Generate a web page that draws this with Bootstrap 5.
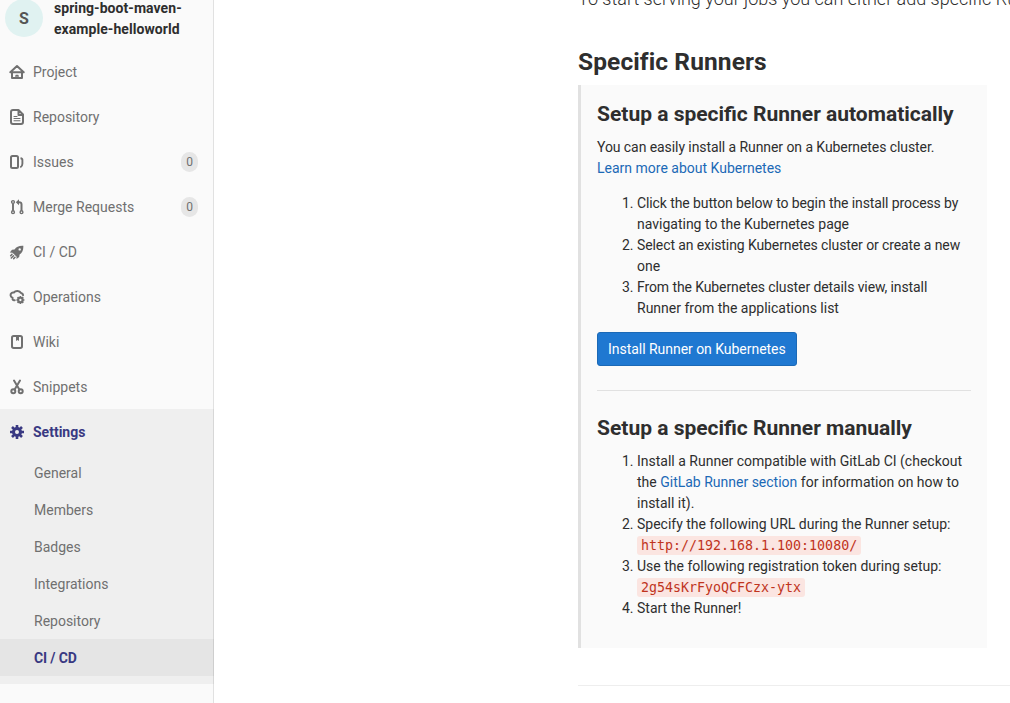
<!DOCTYPE html>
<html lang="en">
<head>
<meta charset="utf-8">
<meta name="viewport" content="width=device-width, initial-scale=1">
<title>CI / CD Settings</title>
<link href="https://cdn.jsdelivr.net/npm/bootstrap@5.3.0/dist/css/bootstrap.min.css" rel="stylesheet">
<style>
  body { font: 400 14px/21px Roboto, "Noto Sans", sans-serif; color: #2e2e2e; background: #fff; }
  a { text-decoration: none; color: #1b69b6; }
  .shell { height: 703px; }
  .sidebar { width: 214px; background: #fafafa; box-shadow: inset -1px 0 0 #e1e1e1; }
  .project-head { height: 49px; padding-left: 5px; gap: 11px; }
  .project-title { margin-top: -2px; font-weight: 700; letter-spacing: .06px; }
  .avatar { width: 38px; height: 38px; margin-top: -1px; background: #e0f2f1; color: #555; font-size: 16px; font-weight: 700; }
  .sidebar .nav-link { height: 45px; padding: 1px 16px 0 9px; gap: 8px; color: #707070; }
  .sidebar svg { width: 16px; height: 16px; flex: none; }
  .count { width: 17px; height: 20px; line-height: 20px; background: #e6e6e6; font-size: 12px; }
  .settings { background: rgba(0,0,0,.043); padding-bottom: 8px; }
  .sidebar .settings > .nav-link { color: #393982; font-weight: 700; }
  .sidebar .sub .nav-link { height: 37px; padding: 1px 0 0 34px; }
  .sidebar .sub .nav-link.active { background: rgba(0,0,0,.04); color: #393982; font-weight: 700; letter-spacing: -.15px; }
  .content { margin-left: 364px; }
  .intro { margin: -14px 0 0; height: 62px; font-size: 18px; line-height: 25px; font-weight: 300; white-space: nowrap; }
  h4 { font-size: 24.5px; line-height: 27px; font-weight: 700; margin: 0 0 10px; letter-spacing: .1px; }
  .callout { width: 409px; height: 563px; background: #fafafa; border-left: 3px solid #e1e1e1; padding: 17px 16px 16px; }
  h5 { font-size: 21px; line-height: 25px; font-weight: 700; margin: 0 0 10px; }
  .lead-in { margin: 0 0 14px; }
  .lead-in::first-line { letter-spacing: -.075px; }
  .callout ol { padding-left: 40px; margin: 0 0 13px; }
  .auto-steps li::first-line { letter-spacing: -.1px; }
  .btn-install { height: 34px; padding: 5px 10px; font-size: 14px; line-height: 22px; letter-spacing: -.035px; border-radius: 3px; background: #1f78d1; border: 1px solid #1b69b6; color: #fff; }
  .callout hr { margin: 24px 0 25px; border-top: 1px solid #e1e1e1; opacity: 1; }
  code { font: 13.3px/18px "DejaVu Sans Mono", monospace; color: #c0341d; background: #fbe5e1; border-radius: 3px; padding: 2px 4px; }
  .divider { margin: 37px 0 0; border-top: 1px solid #eee; opacity: 1; }
</style>
</head>
<body>
<div class="shell d-flex overflow-hidden">
  <aside class="sidebar flex-shrink-0">
    <div class="project-head d-flex align-items-start">
      <div class="avatar rounded-circle d-flex align-items-center justify-content-center flex-shrink-0">S</div>
      <div class="project-title">spring-boot-maven-<br>example-helloworld</div>
    </div>
    <nav class="nav flex-column flex-nowrap">
      <a class="nav-link d-flex align-items-center" href="#"><svg viewBox="0 0 16 16" fill="none" stroke="currentColor" stroke-width="2" stroke-linecap="round" stroke-linejoin="round"><path d="M1.300 8.300 8 2l6.700 6.300zM3 9v5h10V9"/><path d="M7 14v-2.500h2V14" stroke-width="1.300"/></svg>Project</a>
      <a class="nav-link d-flex align-items-center" href="#"><svg viewBox="0 0 16 16" fill="none" stroke="currentColor" stroke-width="2" stroke-linejoin="round"><path d="M9.500 1H4a2 2 0 0 0-2 2v10a2 2 0 0 0 2 2h8a2 2 0 0 0 2-2V5.500zV6h4.500"/><path d="M5 7.500h3M5 9.500h6M5 11.700h6" stroke-width="1.100" stroke-linecap="round"/></svg>Repository</a>
      <a class="nav-link d-flex align-items-center" href="#"><svg viewBox="0 0 16 16" fill="none" stroke="currentColor" stroke-width="2"><rect x="2" y="2" width="7" height="12" rx="1.500"/><path d="M11.500 4.300c1.600.200 2 .700 1.900 2v3.500c0 1.800-.600 2.900-2.100 3.600" stroke-width="1.900"/></svg>Issues<span class="count rounded-pill text-center ms-auto">0</span></a>
      <a class="nav-link d-flex align-items-center" href="#"><svg viewBox="0 0 16 16" fill="none" stroke="currentColor" stroke-width="1.400"><circle cx="4" cy="3" r="1.400"/><circle cx="4" cy="13.200" r="1.400"/><circle cx="12.500" cy="13.200" r="1.400"/><path d="M4 4.500v7.200" stroke-width="1.900"/><path d="M12.500 11.700V5.500c0-1.500-.700-2.200-2.500-2.200H8.500" stroke-width="2"/><path d="m10 .300-3.200 3 3.200 3z" fill="currentColor" stroke="none"/></svg>Merge Requests<span class="count rounded-pill text-center ms-auto">0</span></a>
      <a class="nav-link d-flex align-items-center" href="#"><svg viewBox="0 0 16 16" fill="currentColor"><path fill-rule="evenodd" d="M14.300 1.800c-4.200-.3-6.800 1-8.800 3.600L3 5.700.800 8.600l2.700.100 4.100 4L7.500 15l2.700-2 .4-2.500c2.600-2 4-4.500 3.700-8.700zM10.700 4.200a1.200 1.200 0 1 1 0 2.400 1.200 1.200 0 0 1 0-2.400z"/><path d="m3 10.300-1.300 1.400M4.500 11.800l-2.200 2.200M6 13.300l-1.300 1.300" stroke="currentColor" stroke-width="1.500" stroke-linecap="round"/></svg>CI / CD</a>
      <a class="nav-link d-flex align-items-center" href="#"><svg viewBox="0 0 16 16" fill="none" stroke="currentColor"><path d="M5.700 11.300H5a1.600 1.600 0 0 1-1.500-1.700v-1A2.600 2.600 0 0 1 2.600 4c.700-.5 1.500-.6 2.200-.4C6.500 1.300 10.600 1.300 12 4c1.300.200 2 1 2.100 2.200" stroke-width="2" stroke-linecap="round" stroke-linejoin="round"/><circle cx="11.400" cy="11" r="2.200" stroke-width="2.100"/><path d="M11.400 7v1.600M11.400 13.400V15M7.400 11H9M13.800 11h1.600M8.600 8.200l1.100 1.100M13.100 12.700l1.100 1.100M8.600 13.800l1.100-1.100M13.100 9.300l1.100-1.100" stroke-width="1.700"/></svg>Operations</a>
      <a class="nav-link d-flex align-items-center" href="#"><svg viewBox="0 0 16 16" fill="none" stroke="currentColor" stroke-width="2"><rect x="3" y="2" width="10" height="12" rx="1.700"/><path fill="currentColor" stroke="none" d="M7 2h3v5L8.500 5.900 7 7z"/></svg>Wiki</a>
      <a class="nav-link d-flex align-items-center" href="#"><svg viewBox="0 0 16 16" fill="none" stroke="currentColor" stroke-width="2"><circle cx="4.300" cy="12.200" r="2"/><circle cx="11.700" cy="12.200" r="2"/><path d="m5 1.500 5.500 9.200M11 1.500 5.500 10.700" stroke-linecap="round"/></svg>Snippets</a>
      <div class="settings">
        <a class="nav-link d-flex align-items-center" href="#"><svg viewBox="0 0 16 16" fill="none" stroke="currentColor"><circle cx="8" cy="8" r="3.500" stroke-width="3"/><path d="M8 1v3M8 12v3M1 8h3M12 8h3M3 3l2.200 2.200M10.800 10.800 13 13M3 13l2.200-2.200M10.800 5.200 13 3" stroke-width="2.600"/></svg>Settings</a>
        <div class="sub">
          <a class="nav-link d-flex align-items-center" href="#">General</a>
          <a class="nav-link d-flex align-items-center" href="#">Members</a>
          <a class="nav-link d-flex align-items-center" href="#">Badges</a>
          <a class="nav-link d-flex align-items-center" href="#">Integrations</a>
          <a class="nav-link d-flex align-items-center" href="#">Repository</a>
          <a class="nav-link active d-flex align-items-center" href="#">CI / CD</a>
        </div>
      </div>
    </nav>
  </aside>
  <main class="content flex-grow-1 overflow-hidden">
    <p class="intro">To start serving your jobs you can either add specific Runners</p>
    <h4>Specific Runners</h4>
    <section class="callout">
      <h5>Setup a specific Runner automatically</h5>
      <p class="lead-in">You can easily install a Runner on a Kubernetes cluster.<br><a href="#">Learn more about Kubernetes</a></p>
      <ol class="auto-steps">
        <li>Click the button below to begin the install process by navigating to the Kubernetes page</li>
        <li>Select an existing Kubernetes cluster or create a new one</li>
        <li>From the Kubernetes cluster details view, install Runner from the applications list</li>
      </ol>
      <a class="btn btn-install" href="#">Install Runner on Kubernetes</a>
      <hr>
      <h5>Setup a specific Runner manually</h5>
      <ol>
        <li>Install a Runner compatible with GitLab CI (checkout the <a href="#">GitLab Runner section</a> for information on how to install it).</li>
        <li>Specify the following URL during the Runner setup: <code>http://192.168.1.100:10080/</code></li>
        <li>Use the following registration token during setup: <code>2g54sKrFyoQCFCzx-ytx</code></li>
        <li>Start the Runner!</li>
      </ol>
    </section>
    <hr class="divider">
  </main>
</div>
<script src="https://cdn.jsdelivr.net/npm/bootstrap@5.3.0/dist/js/bootstrap.bundle.min.js"></script>
</body>
</html>
